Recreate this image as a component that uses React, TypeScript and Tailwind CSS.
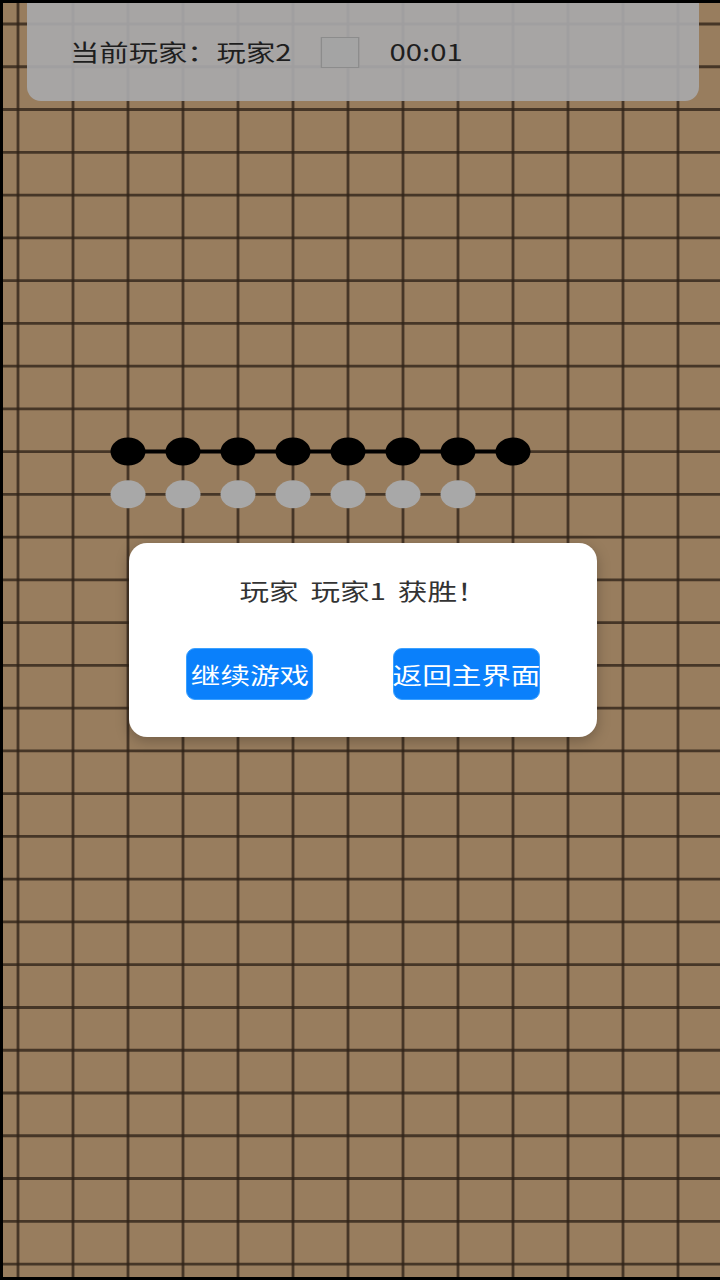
import React from 'react';

const COLS = 13;
const ROWS = 30;
const X0 = 18;
const DX = 55;
const Y0 = 24;
const DY = 42.76;

const Board: React.FC = () => {
    const xs = Array.from({ length: COLS }, (_, i) => X0 + i * DX);
    const ys = Array.from({ length: ROWS }, (_, j) => Y0 + j * DY);
    const rowBlack = Y0 + 10 * DY;
    const rowWhite = Y0 + 11 * DY;

    return (
        <svg width="720" height="1280" viewBox="0 0 720 1280" className="block">
            <rect width="720" height="1280" fill="#987d5e" />
            {xs.map((x) => (
                <line key={'v' + x} x1={x} y1={0} x2={x} y2={1280} stroke="#2f2318" strokeWidth="2.8" strokeOpacity="0.78" />
            ))}
            {ys.map((y) => (
                <line key={'h' + y} x1={0} y1={y} x2={720} y2={y} stroke="#2f2318" strokeWidth="2.8" strokeOpacity="0.78" />
            ))}
            {/* winning line */}
            <line x1={xs[2]} y1={rowBlack} x2={xs[9]} y2={rowBlack} stroke="#000" strokeWidth="4" />
            {xs.slice(2, 10).map((x) => (
                <ellipse key={'b' + x} cx={x} cy={rowBlack} rx="17.5" ry="14" fill="#000" />
            ))}
            {xs.slice(2, 9).map((x) => (
                <ellipse key={'w' + x} cx={x} cy={rowWhite} rx="17.5" ry="14" fill="#a8a8a8" />
            ))}
        </svg>
    );
};

const Wide: React.FC<{ children: React.ReactNode; className?: string }> = ({ children, className }) => (
    <span className={'inline-block scale-x-[1.286] whitespace-nowrap ' + (className ?? '')}>{children}</span>
);

export default function App() {
    return (
        <div
            className="relative w-[720px] h-[1280px] overflow-hidden bg-[#987d5e]"
            style={{ fontFamily: '"Noto Sans CJK SC", "Noto Sans", sans-serif' }}
        >
            <Board />

            {/* status bar */}
            <div className="absolute top-0 left-[27px] w-[672px] h-[101px] rounded-b-[14px] bg-[rgba(168,168,170,0.92)] flex items-center pl-[43px] pt-[3px]">
                <div className="flex items-center origin-left scale-x-[1.286] text-[22.8px] leading-none text-[#1e1e1e]">
                    <span className="w-[194.5px] whitespace-nowrap">当前玩家：玩家2</span>
                    <span className="w-[30px] h-[31px] border border-[#8c8c8c] bg-[#a4a4a4] mr-[24px]" />
                    <span className="whitespace-nowrap">00:01</span>
                </div>
            </div>

            {/* result dialog */}
            <div className="absolute left-[129px] top-[543px] w-[468px] h-[194px] rounded-[18px] bg-white shadow-[0_4px_14px_rgba(0,0,0,0.25)] flex flex-col">
                <div className="h-[98px] pt-[32px] text-center text-[23px] leading-[30px] text-[#333] [word-spacing:4px]">
                    <Wide>玩家 玩家1 获胜！</Wide>
                </div>
                <div className="flex pl-[57px] gap-[80px] pt-[7px]">
                    <button className="w-[127px] h-[52px] rounded-[9px] bg-[#0a80fb] border border-[#3aa0ff] text-white text-[23px] leading-none flex items-center justify-center">
                        <Wide>继续游戏</Wide>
                    </button>
                    <button className="w-[147px] h-[52px] rounded-[9px] bg-[#0a80fb] border border-[#3aa0ff] text-white text-[23px] leading-none flex items-center justify-center">
                        <Wide>返回主界面</Wide>
                    </button>
                </div>
            </div>

            {/* device frame edge */}
            <div className="pointer-events-none absolute inset-0 border-t-[3px] border-l-[3px] border-b-[3px] border-black" />
        </div>
    );
}
